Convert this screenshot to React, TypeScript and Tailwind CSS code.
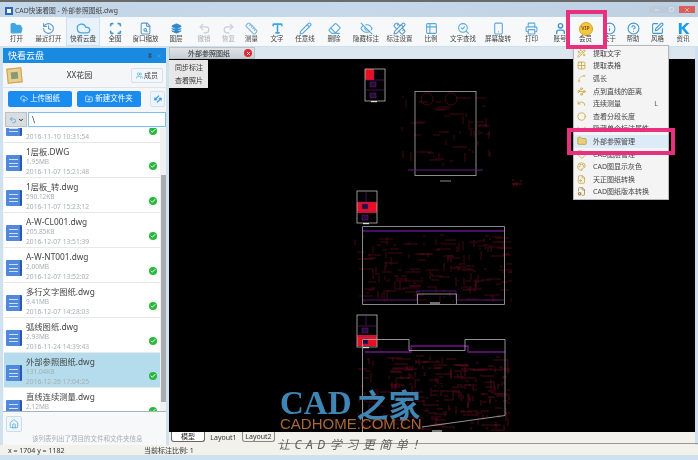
import React from "react";
import { FolderOpen, History, Cloud, Scan, FileSearch, Layers, Undo2, Redo2, Ruler, Type, Pencil, Eraser, EyeOff, PencilRuler, Table2, SearchCheck, Smartphone, Printer, User, Info, CircleHelp, SquarePen, CloudUpload, FolderPlus, ArrowLeftRight, Users, Home, Check, Minus, Square, X, Pin, Wand2, Grid2x2, Spline, Waypoints, Undo, ChevronDown, Folder, Palette, FileInput, FileCog, Circle, Tag, EyeClosed } from "lucide-react";

const FONT = "font-['Noto_Sans','Noto_Sans_CJK_SC',sans-serif]";

type Tool = { label: string; w: string; icon: React.ReactNode; active?: boolean; dim?: boolean };
const ic = "w-[13px] h-[13px]";
const tools: Tool[] = [
  { label: "打开", w: "w-[29px]", icon: <FolderOpen className={ic} color="#3fa6e0" fill="#3fa6e0" /> },
  { label: "最近打开", w: "w-[35px]", icon: <History className={ic} color="#5a9cc8" /> },
  { label: "快看云盘", w: "w-[34px]", active: true, icon: <Cloud className="w-[15px] h-[15px]" color="#4aa6e0" /> },
  { label: "全图", w: "w-[30px]", icon: <Scan className={ic} color="#3f96d0" strokeWidth={3} /> },
  { label: "窗口缩放", w: "w-[31px]", icon: <FileSearch className={ic} color="#5a9cc8" /> },
  { label: "图层", w: "w-[30px]", icon: <Layers className="h-[11px] w-[11px]" color="#2f88c8" fill="#2f88c8" /> },
  { label: "撤销", w: "w-[26px]", dim: true, icon: <Undo2 className={ic} color="#c4ced4" /> },
  { label: "恢复", w: "w-[23px]", dim: true, icon: <Redo2 className={ic} color="#c4ced4" /> },
  { label: "测量", w: "w-[23px]", icon: <Ruler className={ic} color="#78b4dc" /> },
  { label: "文字", w: "w-[28px]", icon: <Type className={ic} color="#3fa6e0" strokeWidth={3} /> },
  { label: "任意线", w: "w-[28px]", icon: <Pencil className={ic} color="#58a8dc" /> },
  { label: "删除", w: "w-[30px]", icon: <Eraser className={ic} color="#58a8dc" /> },
  { label: "隐藏标注", w: "w-[34px]", icon: <EyeOff className={ic} color="#58a8dc" /> },
  { label: "标注设置", w: "w-[33px]", icon: <PencilRuler className={ic} color="#5a9cc8" /> },
  { label: "比例", w: "w-[30px]", icon: <Table2 className={ic} color="#58a8dc" /> },
  { label: "文字查找", w: "w-[34px]", icon: <SearchCheck className={ic} color="#58a8dc" /> },
  { label: "屏幕旋转", w: "w-[36px]", icon: <Smartphone className={ic} color="#58a8dc" /> },
  { label: "打印", w: "w-[31px]", icon: <Printer className={ic} color="#58a8dc" /> },
  { label: "账号", w: "w-[26px]", icon: <User className={ic} color="#3f96d0" strokeWidth={2.5} /> },
  {
    label: "会员",
    w: "w-[25px]",
    icon: (
      <span className="flex h-[14px] w-[14px] items-center justify-center rounded-full border border-[#d9a520] bg-[#f2c649] text-[5px] font-bold leading-none text-[#8a5a00]">
        VIP
      </span>
    ),
  },
  { label: "关于", w: "w-[23px]", icon: <Info className={ic} color="#3f96d0" /> },
  { label: "帮助", w: "w-[24px]", icon: <CircleHelp className={ic} color="#3f96d0" /> },
  { label: "风格", w: "w-[25px]", icon: <SquarePen className={ic} color="#3f96d0" /> },
  {
    label: "资讯",
    w: "w-[26px]",
    icon: (
      <svg viewBox="0 0 14 14" className={ic}>
        <path d="M2 1h3v5l5-5h3.5L8 6.5l5.5 6.5H10L5 7v6H2z" fill="#1a9ae8" />
      </svg>
    ),
  },
];

const files = [
  { name: "", size: "", date: "2016-11-10 10:31:54" },
  { name: "1层板.DWG", size: "1.95MB", date: "2016-11-07 15:21:48" },
  { name: "1层板_转.dwg", size: "590.12KB", date: "2016-11-07 15:23:12" },
  { name: "A-W-CL001.dwg", size: "205.85KB", date: "2016-12-07 13:51:39" },
  { name: "A-W-NT001.dwg", size: "2.00MB", date: "2016-12-07 13:52:02" },
  { name: "多行文字图纸.dwg", size: "9.41MB", date: "2016-12-07 14:28:03" },
  { name: "弧线图纸.dwg", size: "2.93MB", date: "2016-11-24 14:39:43" },
  { name: "外部参照图纸.dwg", size: "131.04KB", date: "2016-12-26 17:04:25", active: true },
  { name: "直线连续测量.dwg", size: "2.12MB", date: "" },
];

const menu: { t: string; icon: React.ReactNode; key?: string; active?: boolean }[] = [
  { t: "提取文字", icon: <Wand2 className="h-[9px] w-[9px]" color="#c9a030" /> },
  { t: "提取表格", icon: <Grid2x2 className="h-[9px] w-[9px]" color="#c9a030" /> },
  { t: "弧长", icon: <Spline className="h-[9px] w-[9px]" color="#d8b860" /> },
  { t: "点到直线的距离", icon: <Waypoints className="h-[9px] w-[9px]" color="#c9a030" /> },
  { t: "连续测量", key: "L", icon: <Undo className="h-[9px] w-[9px]" color="#c9a030" /> },
  { t: "查看分段长度", icon: <Circle className="h-[9px] w-[9px]" color="#c9a030" /> },
  { t: "隐藏单个标注属性", icon: <EyeClosed className="h-[9px] w-[9px]" color="#c9a030" /> },
  { t: "外部参照管理", active: true, icon: <Folder className="h-[10px] w-[10px]" color="#c09a30" fill="#e8d080" /> },
  { t: "CAD图层管理", icon: <Tag className="h-[9px] w-[9px]" color="#c9a030" /> },
  { t: "CAD图显示灰色", icon: <Palette className="h-[9px] w-[9px]" color="#c9a030" /> },
  { t: "天正图纸转换", icon: <FileInput className="h-[9px] w-[9px]" color="#c9a030" /> },
  { t: "CAD图纸版本转换", icon: <FileCog className="h-[9px] w-[9px]" color="#a08030" /> },
];

function rng(seed: number) {
  let s = seed;
  return () => {
    s = (s * 16807) % 2147483647;
    return s / 2147483647;
  };
}
function scribble(seed: number, x0: number, y0: number, x1: number, y1: number, n: number) {
  const r = rng(seed);
  let d = "";
  for (let i = 0; i < n; i++) {
    const x = x0 + r() * (x1 - x0);
    const y = y0 + r() * (y1 - y0);
    const len = 2 + r() * 14;
    if (r() > 0.45) d += `M${x.toFixed(0)} ${y.toFixed(0)}h${Math.min(len, x1 - x).toFixed(0)}`;
    else d += `M${x.toFixed(0)} ${y.toFixed(0)}v${Math.min(len * 0.6, y1 - y).toFixed(0)}`;
  }
  return d;
}

function Thumb({ x, y, red }: { x: number; y: number; red: number }) {
  return (
    <g>
      <rect x={x} y={y + (red === 0 ? 0 : red === 1 ? 11 : 20)} width={red === 0 ? 9 : 20} height={11} fill="#e81020" />
      <rect x={x} y={y} width="20" height="32" fill="none" stroke="#b8b8b8" strokeWidth="0.8" />
      <path d={`M${x} ${y + 11}h20M${x} ${y + 21}h20M${x + 9} ${y}v11`} stroke="#6a2080" strokeWidth="0.6" fill="none" />
      <rect x={x + 5} y={y + 13} width="6" height="5" fill="#2a0c3c" stroke="#6a2080" strokeWidth="0.5" />
      <rect x={x + 5} y={y + 24} width="6" height="5" fill="#2a0c3c" stroke="#6a2080" strokeWidth="0.5" />
      <rect x={x + 6} y={y + 32} width="6" height="1.2" fill="#ddd" />
    </g>
  );
}

function Drawing() {
  return (
    <svg viewBox="169 59 526 373" className="block h-[373px] w-[526px]">
      <rect x="169" y="59" width="526" height="373" fill="#000" />
      <Thumb x={365} y={69} red={0} />
      <Thumb x={357} y={191} red={1} />
      <Thumb x={357} y={315} red={2} />

      <path d={scribble(11, 402, 96, 490, 166, 60)} stroke="#5e0a1e" strokeWidth="0.7" fill="none" />
      <circle cx="427" cy="99" r="6" fill="none" stroke="#5e0a1e" strokeWidth="0.7" />
      <circle cx="451" cy="99" r="6" fill="none" stroke="#5e0a1e" strokeWidth="0.7" />
      <rect x="415" y="91.5" width="61" height="84" fill="none" stroke="#9a9a9a" strokeWidth="0.9" />
      <path d="M408 170h75" stroke="#6e1f88" strokeWidth="0.9" />
      <path d="M440 181h11" stroke="#8a8a8a" strokeWidth="1" />
      <path d={scribble(21, 512, 178, 522, 186, 6)} stroke="#801028" strokeWidth="0.7" fill="none" />

      <path d={scribble(31, 355, 235, 512, 302, 190)} stroke="#5e0a1e" strokeWidth="0.7" fill="none" />
      <path d="M363 231h141" stroke="#5c1488" strokeWidth="1.3" />
      <path d="M363 300h54v-9h39v9h48" stroke="#5c1478" strokeWidth="0.9" fill="none" />
      <path d="M362.5 226.5h142v78h-142zM417.5 304v-10h39v10" stroke="#9a9a9a" strokeWidth="0.9" fill="none" />
      <path d="M430 303h10" stroke="#ddd" strokeWidth="1" />

      <path d={scribble(47, 358, 356, 510, 430, 260)} stroke="#6a0c22" strokeWidth="0.7" fill="none" />
      <path d="M365 352h46v-6h57v6h37" stroke="#6e1488" strokeWidth="1.3" fill="none" />
      <path d="M362.5 432V339.5h46.5v11h56v-11h40v76L422 427" stroke="#a0a0a0" strokeWidth="0.9" fill="none" />
      <path d="M432 431h10" stroke="#ccc" strokeWidth="1.2" />
    </svg>
  );
}

export default function App() {
  return (
    <div className={`relative flex h-[460px] w-[698px] flex-col overflow-hidden bg-[#cfe0ef] blur-[0.35px] ${FONT}`}>
      {/* title bar */}
      <div className="flex h-[17px] items-center gap-[2px] border-t-2 border-[#6a6a6a] bg-gradient-to-r from-[#c3d6e8] via-[#c6d9ea] to-[#bdd0e2] pl-[5px] pt-[3px]">
        <span className="flex h-[8px] w-[8px] items-center justify-center bg-[#2a68b8]">
          <span className="h-[4px] w-[4px] bg-white" />
        </span>
        <span className="text-[6.8px] leading-none text-[#444]">CAD快速看图 - 外部参照图纸.dwg</span>
        <div className="ml-auto mt-[-3px] flex h-[7px] items-stretch pr-[3px]">
          <span className="flex w-[15px] items-center justify-center bg-[#bccbd9]"><Minus className="h-[6px] w-[6px]" color="#fff" /></span>
          <span className="flex w-[15px] items-center justify-center bg-[#bccbd9]"><Square className="h-[5px] w-[5px]" color="#fff" /></span>
          <span className="flex w-[16px] items-center justify-center bg-[#d9605a]"><X className="h-[6px] w-[6px]" color="#fff" /></span>
        </div>
      </div>

      {/* toolbar */}
      <div className="flex h-[29px] items-stretch bg-[#f6f8fa] pl-[2px]">
        {tools.map((t) => (
          <div
            key={t.label}
            className={`flex ${t.w} flex-col items-center justify-center pt-[2px] ${t.active ? "border border-[#cfe0ef] bg-[#e8f2fa]" : ""}`}
          >
            <span className="flex h-[12px] items-center">{t.icon}</span>
            <span className={`text-[6.5px] leading-[8px] whitespace-nowrap ${t.dim ? "text-[#aab2b8]" : "text-[#444]"}`}>{t.label}</span>
          </div>
        ))}
      </div>

      {/* main */}
      <div className="flex h-[399px] gap-[3px] pl-[3px] pt-[2px]">
        {/* sidebar */}
        <div className="flex h-[397px] w-[163px] flex-col bg-[#f4f6f8]">
          <div className="flex h-[15px] items-center justify-between bg-[#1a8ae0] pl-[5px] pr-[4px]">
            <span className="text-[9px] leading-none text-white">快看云盘</span>
            <span className="flex items-center gap-[3px]">
              <Pin className="h-[6px] w-[6px]" color="#2a5a80" fill="#2a5a80" />
              <X className="h-[6px] w-[6px]" color="#5fa8d8" />
            </span>
          </div>
          <div className="flex h-[24px] items-center justify-between pl-[4px] pr-[3px]">
            <span className="flex h-[15px] w-[15px] -rotate-6 items-center justify-center border border-[#caa050] bg-[#e8cf90]">
              <span className="h-[7px] w-[7px] bg-[#8a9a70]" />
            </span>
            <span className="ml-[6px] text-[8px] leading-none text-[#333]">XX花园</span>
            <span className="flex h-[15px] w-[32px] items-center justify-center gap-[1px] rounded-[2px] border border-[#d4e0ea] bg-[#f3f7fb]">
              <Users className="h-[7px] w-[7px]" color="#2f9fe0" />
              <span className="text-[7px] leading-none text-[#444]">成员</span>
            </span>
          </div>
          <div className="flex h-[23px] items-center border-t border-[#dde3e8] pl-[5px] pr-[1px]">
            <span className="flex h-[16px] w-[64px] items-center justify-center gap-[2px] rounded-[2px] bg-[#1a8cf0]">
              <CloudUpload className="h-[8px] w-[8px]" color="#fff" />
              <span className="text-[7.5px] leading-none text-white">上传图纸</span>
            </span>
            <span className="ml-[5px] flex h-[16px] w-[64px] items-center justify-center gap-[2px] rounded-[2px] bg-[#1a8cf0]">
              <FolderPlus className="h-[8px] w-[8px]" color="#fff" />
              <span className="text-[7.5px] leading-none text-white">新建文件夹</span>
            </span>
            <span className="ml-auto flex h-[16px] w-[15px] items-center justify-center rounded-[2px] border border-[#d4e0ea] bg-[#eef4fa]">
              <ArrowLeftRight className="h-[8px] w-[8px] -rotate-45" color="#1a8cf0" strokeWidth={3} />
            </span>
          </div>
          <div className="mt-[2px] flex h-[15px] items-stretch pl-[2px]">
            <span className="flex w-[22px] items-center justify-center gap-[1px] border border-[#b8c0c8] bg-[#d8dde2]">
              <Undo2 className="h-[8px] w-[8px]" color="#4a9ad8" />
              <ChevronDown className="h-[6px] w-[6px]" color="#222" strokeWidth={4} />
            </span>
            <span className="ml-[1px] flex flex-1 items-center border border-[#7cc0ec] bg-white pl-[3px] text-[8px] leading-none text-[#333]">\</span>
          </div>

          {/* list */}
          <div className="mt-[1px] flex h-[284px] overflow-hidden border-b border-[#aab2ba] pl-[1px]">
            <div className="-mt-[20px] w-[156px] flex-none">
              {files.map((f, i) => (
                <div key={i} className={`flex h-[35px] items-stretch border-b border-[#e6e9ec] ${f.active ? "bg-[#b4dcec]" : "bg-white"}`}>
                  <span className="ml-[2px] mt-[12px] flex h-[16px] w-[16px] flex-none items-center justify-center rounded-[1px] border-r-2 border-[#2a58b0] bg-[#5088dc]">
                    <span className="flex h-[8px] w-[9px] flex-col justify-between">
                      <span className="h-[1px] bg-[#cfe0ff]" />
                      <span className="h-[1px] bg-[#cfe0ff]" />
                      <span className="h-[1px] bg-[#cfe0ff]" />
                    </span>
                  </span>
                  <div className="ml-[4px] flex flex-1 flex-col pt-[3.5px]">
                    <span className="h-[10px] text-[8.3px] leading-[10px] whitespace-nowrap text-[#444]">{f.name}</span>
                    <span className="h-[10px] text-[6.5px] leading-[10px] text-[#a8aeb4]">{f.size}</span>
                    {f.date && <span className="h-[10px] text-[6.7px] leading-[10px] whitespace-nowrap text-[#a8aeb4]">{f.date}</span>}
                  </div>
                  <span className="mr-[3px] mt-[19px] flex h-[8px] w-[8px] items-center justify-center rounded-full bg-[#28b83c]">
                    <Check className="h-[6px] w-[6px]" color="#fff" strokeWidth={4} />
                  </span>
                </div>
              ))}
            </div>
            <div className="relative w-[6px] flex-none bg-[#eef0f2]">
              <div className="absolute left-[0.5px] top-[47px] h-[227px] w-[5px] bg-[#a8acb0]" />
            </div>
          </div>

          {/* footer */}
          <div className="flex flex-1 flex-col bg-[#f6f8fa] pl-[3px]">
            <span className="mt-[4px] flex h-[16px] w-[16px] items-center justify-center rounded-[2px] border border-[#c8dcec] bg-[#f0f7fc]">
              <Home className="h-[10px] w-[10px]" color="#58a8d8" />
            </span>
            <span className="mt-[2px] pl-[26px] text-[6.5px] leading-[10px] whitespace-nowrap text-[#a8aeb4]">该列表列出了项目的文件和文件夹信息</span>
          </div>
        </div>

        {/* right column */}
        <div className="-mt-[1px] flex w-[526px] flex-col">
          <div className="flex h-[12px] items-stretch bg-[#dbe6ef]">
            <div className="flex w-[86px] items-center justify-between border border-[#b8c4cc] bg-gradient-to-b from-[#e0e4e8] to-[#c8ced4] pl-[18px] pr-[2px]">
              <span className="text-[7px] leading-none text-[#222]">外部参照图纸</span>
              <span className="flex h-[8px] w-[8px] items-center justify-center rounded-full bg-[#e02838]">
                <X className="h-[5px] w-[5px]" color="#fff" strokeWidth={4} />
              </span>
            </div>
          </div>
          <Drawing />
          <div className="flex h-[13px] items-start gap-[2px] bg-[#f2f1ec] pl-[2px]">
            <span className="flex h-[10px] w-[34px] items-center justify-center rounded-b-[3px] border border-t-0 border-[#666] bg-white text-[7px] leading-none text-[#222]">模型</span>
            <span className="flex h-[10px] w-[33px] items-center justify-center text-[7px] leading-none text-[#333]">Layout1</span>
            <span className="flex h-[10px] w-[33px] items-center justify-center rounded-b-[3px] border border-t-0 border-[#888] text-[7px] leading-none text-[#333]">Layout2</span>
          </div>
        </div>
      </div>

      {/* status bar */}
      <div className="flex h-[10px] items-center bg-[#f2f1ec] pl-[8px] text-[7px] leading-none text-[#333]">
        <span className="w-[136px]">x = 1704 y = 1182</span>
        <span>当前标注比例: 1</span>
      </div>
      <div className="flex-1 bg-[#cfe0ef]" />

      {/* canvas context popup */}
      <div className="absolute left-[169px] top-[60px] flex h-[28px] w-[39px] flex-col justify-center gap-[4px] bg-[#e8e8e8] pl-[6px] text-[7px] leading-[9px] text-[#333]">
        <span>同步标注</span>
        <span>查看照片</span>
      </div>

      {/* dropdown menu */}
      <div className="absolute left-[573px] top-[45px] flex w-[96px] flex-col border border-[#b8b8b8] bg-[#f4f4f4] py-[1px] shadow-sm">
        {menu.map((m) => (
          <div key={m.t} className={`flex h-[12.6px] items-center pl-[3px] pr-[10px] ${m.active ? "bg-[#dcebf7]" : ""}`}>
            <span className="flex w-[16px] items-center">{m.icon}</span>
            <span className="text-[7px] leading-none whitespace-nowrap text-[#444]">{m.t}</span>
            {m.key && <span className="ml-auto text-[7px] leading-none text-[#555]">{m.key}</span>}
          </div>
        ))}
      </div>

      {/* pink callouts */}
      <div className="absolute left-[566px] top-[10px] h-[39px] w-[41px] border-[4px] border-[#e8307f]" />
      <div className="absolute left-[567px] top-[128px] h-[27px] w-[108px] border-[4px] border-[#e8307f]" />

      {/* watermark */}
      <div className="absolute left-[280px] top-[390px] flex h-[26px] items-center font-['Liberation_Serif','Noto_Sans_CJK_SC',serif] text-[#3f86b4]">
        <span className="text-[33px] leading-[26px] font-bold">CAD</span>
        <span className="ml-[5px] font-['Noto_Sans_CJK_SC',sans-serif] text-[32px] leading-[26px] font-bold">之家</span>
      </div>
      <div className="absolute left-[280px] top-[417px] font-['Liberation_Sans',sans-serif] text-[15px] leading-[14px] text-[#a8683a]">CADHOME.COM.CN</div>
      <div className="absolute left-[278px] top-[443px] h-px w-[420px] bg-[#9a9a90]" />
      <div className="absolute left-[278px] top-[438px] text-[12px] leading-[14px] tracking-[4.5px] whitespace-nowrap text-[#5a5f55] italic">让CAD学习更简单！</div>
    </div>
  );
}
